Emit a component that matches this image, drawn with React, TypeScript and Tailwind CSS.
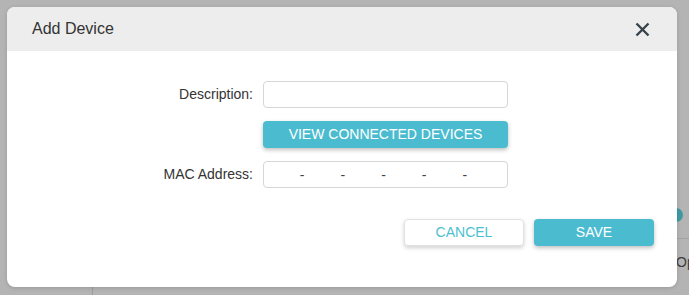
import React from 'react';

const font = { fontFamily: '"Liberation Sans", Arial, sans-serif' };

const MacInput = () => {
  const parts = [0, 1, 2, 3, 4, 5];
  return (
    <div className="flex h-[27px] w-[245px] items-center rounded-[4px] border border-[#d6d6d6] bg-white pr-[4px]">
      {parts.map((p) => (
        <React.Fragment key={p}>
          <input className="h-full min-w-0 flex-1 bg-transparent text-center text-[14px] outline-none" />
          {p < 5 && <span className="w-[5px] text-center text-[14px] leading-none text-[#444]">-</span>}
        </React.Fragment>
      ))}
    </div>
  );
};

const App = () => {
  return (
    <div className="relative h-[295px] w-[689px] overflow-hidden bg-[#b4b4b4]" style={font}>
      {/* dimmed page behind the dialog */}
      <div className="absolute left-[92px] top-[280px] h-[20px] w-px bg-[#9c9c9c]" />
      <div className="absolute left-[670px] top-[238px] h-px w-[30px] bg-[#a2a2a2]" />
      <div className="absolute left-[669px] top-[208px] h-[14px] w-[14px] rounded-full bg-[#3f9aa3]" />
      <div className="absolute left-[676px] top-[252px] text-[14px] text-[#3d3d3d]">Op</div>

      <div className="absolute left-[7px] top-[7px] flex h-[280px] w-[670px] flex-col overflow-hidden rounded-[8px] bg-white shadow-[0_1px_4px_rgba(0,0,0,0.15)]">
        <div className="flex h-[44px] shrink-0 items-center justify-between bg-[#ededed] pl-[25px] pr-[27px]">
          <h2 className="text-[16px] text-[#333]">Add Device</h2>
          <button className="text-[#37434a]">
            <svg width="15" height="15" viewBox="0 0 15 15" fill="none" stroke="currentColor" strokeWidth="2.4" strokeLinecap="butt">
              <path d="M1.5 1.5 L13.5 13.5 M13.5 1.5 L1.5 13.5" />
            </svg>
          </button>
        </div>

        <div className="flex flex-1 flex-col pt-[30px]">
          <div className="grid grid-cols-[256px_245px] items-center gap-y-[13px] text-[14px] text-[#333]">
            <label className="pr-[10px] text-right">Description:</label>
            <input className="h-[27px] rounded-[4px] border border-[#d6d6d6] px-2 outline-none" />

            <div />
            <button className="h-[27px] rounded-[4px] bg-[#4bbccf] text-[14px] text-white shadow-[0_2px_4px_rgba(0,0,0,0.25)]">
              VIEW CONNECTED DEVICES
            </button>

            <label className="pr-[10px] text-right">MAC Address:</label>
            <MacInput />
          </div>

          <div className="mt-[31px] flex justify-end gap-[10px] pr-[23px]">
            <button className="h-[27px] w-[120px] rounded-[4px] border border-[#e2e2e2] bg-white text-[14px] text-[#4cbfd0] shadow-[0_2px_4px_rgba(0,0,0,0.18)]">
              CANCEL
            </button>
            <button className="h-[27px] w-[120px] rounded-[4px] bg-[#4bbccf] text-[14px] text-white shadow-[0_2px_4px_rgba(0,0,0,0.25)]">
              SAVE
            </button>
          </div>
        </div>
      </div>
    </div>
  );
};

export default App;
